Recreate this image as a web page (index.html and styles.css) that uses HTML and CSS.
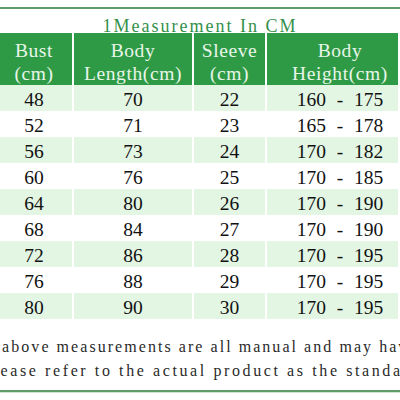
FILE: index.html
```html
<!DOCTYPE html>
<html>
<head>
<meta charset="utf-8">
<link rel="stylesheet" href="styles.css">
</head>
<body>
<div class="page">
  <div class="topline"></div>
  <div class="title">1Measurement In CM</div>
  <div class="table">
    <div class="row head">
      <div class="cell c1">Bust<br>(cm)</div>
      <div class="cell c2">Body<br>Length(cm)</div>
      <div class="cell c3">Sleeve<br>(cm)</div>
      <div class="cell c4">Body<br>Height(cm)</div>
    </div>
    <div class="row alt"><div class="cell c1">48</div><div class="cell c2">70</div><div class="cell c3">22</div><div class="cell c4">160 - 175</div></div>
    <div class="row"><div class="cell c1">52</div><div class="cell c2">71</div><div class="cell c3">23</div><div class="cell c4">165 - 178</div></div>
    <div class="row alt"><div class="cell c1">56</div><div class="cell c2">73</div><div class="cell c3">24</div><div class="cell c4">170 - 182</div></div>
    <div class="row"><div class="cell c1">60</div><div class="cell c2">76</div><div class="cell c3">25</div><div class="cell c4">170 - 185</div></div>
    <div class="row alt"><div class="cell c1">64</div><div class="cell c2">80</div><div class="cell c3">26</div><div class="cell c4">170 - 190</div></div>
    <div class="row"><div class="cell c1">68</div><div class="cell c2">84</div><div class="cell c3">27</div><div class="cell c4">170 - 190</div></div>
    <div class="row alt"><div class="cell c1">72</div><div class="cell c2">86</div><div class="cell c3">28</div><div class="cell c4">170 - 195</div></div>
    <div class="row"><div class="cell c1">76</div><div class="cell c2">88</div><div class="cell c3">29</div><div class="cell c4">170 - 195</div></div>
    <div class="row alt"><div class="cell c1">80</div><div class="cell c2">90</div><div class="cell c3">30</div><div class="cell c4">170 - 195</div></div>
  </div>
  <div class="note">
    <div class="line l1">The above measurements are all manual and may have errors,</div>
    <div class="line l2">Please refer to the actual product as the standard.</div>
  </div>
  <div class="bottomline"></div>
</div>
</body>
</html>
```

FILE: styles.css
```css
html, body {
  margin: 0;
  padding: 0;
  background: #ffffff;
  overflow: hidden;
}
.page {
  width: 400px;
  height: 400px;
  overflow: hidden;
  font-family: "Liberation Serif", "DejaVu Serif", serif;
  color: #111;
}
.topline {
  margin-top: 7px;
  height: 2px;
  background: #5f9c69;
}
.title {
  height: 24px;
  box-sizing: border-box;
  padding-top: 8px;
  line-height: 18px;
  font-size: 18px;
  letter-spacing: 2px;
  text-align: center;
  color: #33904a;
  white-space: nowrap;
}
.table {
  margin-left: -4px;
  width: 402px;
  display: flex;
  flex-direction: column;
}
.row {
  display: grid;
  grid-template-columns: 76px 118px 71px 131px;
  column-gap: 2px;
  height: 26px;
  background: #ffffff;
}
.row.head {
  height: 51px;
  background: #ffffff;
  margin-bottom: 1px;
}
.cell {
  text-align: center;
  font-size: 19.5px;
  line-height: 22px;
  padding-top: 4px;
  box-sizing: border-box;
  white-space: nowrap;
  word-spacing: 6px;
}
.c4 {
  padding-left: 15px;
}
.row.alt .cell {
  background: #e3f5e3;
}
.row.head .cell {
  background: #2f9a45;
  color: #e8f6ea;
  line-height: 23px;
  padding-top: 6px;
  letter-spacing: 0.6px;
  word-spacing: 0;
}
.note {
  margin-top: 16px;
  font-size: 16px;
  line-height: 24px;
  color: #2a2a2a;
  white-space: nowrap;
}
.l1 {
  letter-spacing: 2.05px;
  text-indent: -35px;
}
.l2 {
  letter-spacing: 2.6px;
  text-indent: -18px;
}
.bottomline {
  margin-top: 7px;
  height: 2px;
  background: #5f9c69;
  border-bottom: 1px solid #cfe5d2;
}
```
